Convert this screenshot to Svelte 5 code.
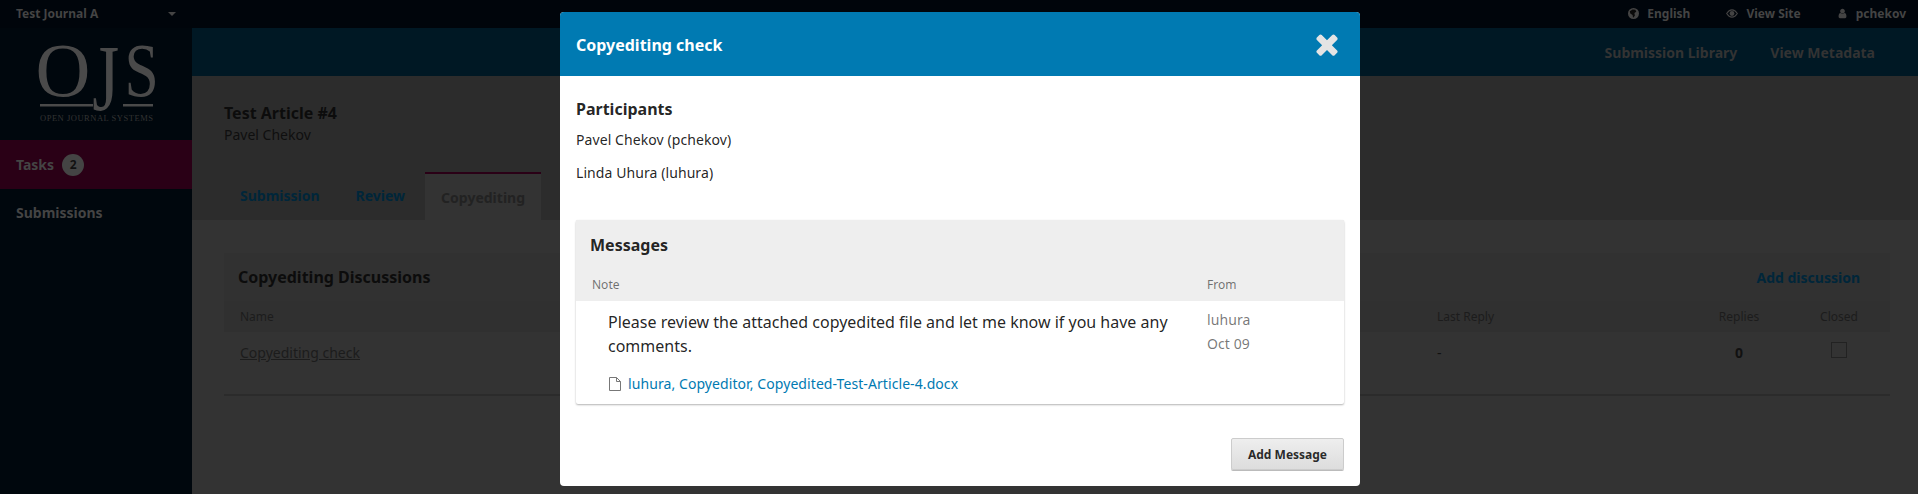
<script>
  const columns = [
    { label: 'Last Reply', value: '-', cls: 'c-last' },
    { label: 'Replies', value: '0', cls: 'c-replies' }
  ];
  let participants = ['Pavel Chekov (pchekov)', 'Linda Uhura (luhura)'];
</script>

<div class="page">
  <header class="topbar">
    <div class="journal">
      <span>Test Journal A</span>
      <i class="caret"></i>
    </div>
    <nav class="usernav">
      <a href="#lang">
        <svg width="11" height="11" viewBox="0 0 12 12"><circle cx="6" cy="6" r="6" fill="#444"/><path d="M2 3.500l3-2 3 .5 1 2-2 1.500 .5 3-2 2-.5-3-2.500-1.500z" fill="#0a0a0a"/></svg>
        English
      </a>
      <a href="#site">
        <svg width="12" height="9" viewBox="0 0 14 10"><path d="M0 5q3-5 7-5t7 5q-3 5-7 5t-7-5zm1.500 0q2.500 3.600 5.500 3.600t5.500-3.600q-2.500-3.600-5.500-3.600t-5.500 3.600z" fill="#444"/><circle cx="7" cy="5" r="2.800" fill="#444"/></svg>
        View Site
      </a>
      <a href="#user">
        <svg width="11" height="11" viewBox="0 0 1792 1792"><path fill="#444" d="M1536 1399q0 109-62.500 187t-150.500 78h-854q-88 0-150.500-78t-62.500-187q0-85 8.500-160.500t31.500-152 58.500-131 94-89 134.500-34.500q131 128 313 128t313-128q76 0 134.500 34.500t94 89 58.500 131 31.500 152 8.500 160.500zm-256-887q0 159-112.500 271.500t-271.500 112.500-271.500-112.500-112.500-271.500 112.500-271.500 271.500-112.500 271.500 112.500 112.500 271.500z"/></svg>
        pchekov
      </a>
    </nav>
  </header>

  <aside class="sidebar">
    <div class="logo">
      <svg width="120" height="90" viewBox="0 0 120 90">
        <text class="logo-big" x="-2.600" y="52" font-size="76">O</text>
        <text class="logo-big" transform="translate(54.300 67) scale(.72 1)" font-size="96">J</text>
        <text class="logo-big" transform="translate(86.400 52) scale(.81 1)" font-size="76">S</text>
        <rect x="2" y="60" width="53" height="2.500" fill="#4a4a4a"/>
        <rect x="85" y="60" width="30" height="2.500" fill="#4a4a4a"/>
        <text class="logo-small" x="2" y="77" textLength="113" font-size="8.500">OPEN JOURNAL SYSTEMS</text>
      </svg>
    </div>
    <a class="side-item active" href="#tasks">Tasks <span class="badge">2</span></a>
    <a class="side-item subs" href="#subs">Submissions</a>
  </aside>

  <main class="main">
    <div class="appbar">
      <a href="#lib">Submission Library</a>
      <a href="#meta">View Metadata</a>
    </div>

    <section class="head">
      <h1>Test Article #4</h1>
      <p>Pavel Chekov</p>
      <div class="tabs">
        <a href="#s">Submission</a>
        <a href="#r">Review</a>
        <a href="#c" class="current">Copyediting</a>
      </div>
    </section>

    <section class="content">
      <div class="panel">
        <div class="panel-title">
          <h2>Copyediting Discussions</h2>
          <a href="#add">Add discussion</a>
        </div>
        <div class="grid-row labels">
          <span class="c-name">Name</span>
          {#each columns as c}<span class={c.cls}>{c.label}</span>{/each}
          <span class="c-closed">Closed</span>
        </div>
        <div class="grid-row values">
          <a class="c-name" href="#check">Copyediting check</a>
          {#each columns as c}<span class={c.cls}>{c.value}</span>{/each}
          <span class="c-closed"><i class="box"></i></span>
        </div>
      </div>
    </section>
  </main>

  <div class="modal">
    <div class="modal-head">
      <h2>Copyediting check</h2>
      <svg class="close" width="26" height="32" viewBox="0 0 1408 1792"><path fill="#e4e4e4" d="M1298 1322q0 40-28 68l-136 136q-28 28-68 28t-68-28l-294-294-294 294q-28 28-68 28t-68-28l-136-136q-28-28-28-68t28-68l294-294-294-294q-28-28-28-68t28-68l136-136q28-28 68-28t68 28l294 294 294-294q28-28 68-28t68 28l136 136q28 28 28 68t-28 68l-294 294 294 294q28 28 28 68z"/></svg>
    </div>
    <div class="modal-body">
      <h3>Participants</h3>
      {#each participants as p}<p class="person">{p}</p>{/each}

      <div class="messages">
        <div class="msg-head">
          <h4>Messages</h4>
          <div class="msg-cols"><span>Note</span><span>From</span></div>
        </div>
        <div class="msg-row">
          <div class="msg-note">
            <p>Please review the attached copyedited file and let me know if you have any comments.</p>
            <a href="#file">
              <svg width="14" height="14" viewBox="0 0 14 14" fill="none" stroke="#777" stroke-width="1"><path d="M1.500 .5h7l4 4v9h-11zM8.500 .5v4h4"/></svg>
              luhura, Copyeditor, Copyedited-Test-Article-4.docx
            </a>
          </div>
          <div class="msg-from">
            <div>luhura</div>
            <div>Oct 09</div>
          </div>
        </div>
      </div>

      <div class="actions"><button>Add Message</button></div>
    </div>
  </div>
</div>

<style>
  :global(body) { margin: 0; background: #333; }
  * { box-sizing: border-box; }
  a { text-decoration: none; color: inherit; }
  h1, h2, h3, h4, p { margin: 0; }

  .page {
    position: relative;
    width: 1918px;
    height: 494px;
    overflow: hidden;
    display: grid;
    grid-template-columns: 192px 1fr;
    grid-template-rows: 28px 1fr;
    font-family: "Noto Sans", sans-serif;
    font-size: 14px;
    color: #111;
    background: #333;
  }

  .topbar {
    grid-column: 1 / 3;
    display: flex;
    justify-content: space-between;
    align-items: center;
    background: #00050b;
    color: #444;
    font-size: 12px;
    font-weight: 700;
    padding: 0 12px 1px 16px;
  }
  .journal { display: flex; align-items: center; width: 160px; justify-content: space-between; }
  .caret { border: 4px solid transparent; border-top-color: #444; margin-top: 4px; }
  .usernav { display: flex; gap: 36px; }
  .usernav a { display: flex; align-items: center; gap: 8px; }

  .sidebar { background: #00070d; color: #444; font-weight: 700; }
  .logo { height: 112px; padding: 16px 0 0 38px; }
  .logo svg { display: block; overflow: visible; }
  .logo-big { font-family: "Liberation Serif", serif; font-weight: 400; fill: #4a4a4a; }
  .logo-small { font-family: "Liberation Serif", serif; font-weight: 400; fill: #333; }
  .side-item { display: flex; align-items: center; gap: 8px; height: 49px; padding-left: 16px; }
  .side-item.active { background: #2a0016; }
  .side-item.subs { padding-bottom: 2px; }
  .badge {
    display: flex;
    align-items: center;
    justify-content: center;
    width: 22px;
    height: 22px;
    border-radius: 50%;
    background: #444;
    color: #111;
    font-size: 12px;
  }

  .main { display: flex; flex-direction: column; min-width: 0; }
  .appbar {
    display: flex;
    justify-content: flex-end;
    align-items: center;
    gap: 33px;
    height: 48px;
    flex: none;
    padding-right: 43px;
    background: #001824;
    color: #333;
    font-weight: 700;
  }

  .head { height: 144px; flex: none; background: #2c2c2c; padding: 27px 32px 0; }
  .head h1 { font-size: 16px; line-height: 20px; color: #0c0c0c; }
  .head p { line-height: 20px; margin-top: 2px; color: #0f0f0f; }
  .tabs { display: flex; gap: 4px; margin-top: 27px; height: 48px; font-weight: 700; color: #00263a; }
  .tabs a { padding: 14px 16px 0; }
  .tabs .current { background: #333; color: #222; border-top: 2px solid #2a0016; }

  .content { flex: 1; padding: 33px 28px 0 32px; background: #333; }
  .panel { height: 143px; border-bottom: 2px solid #2b2b2b; background: #313131; }
  .panel-title { display: flex; justify-content: space-between; align-items: center; height: 48px; padding: 0 30px 0 14px; }
  .panel-title h2 { font-size: 16px; color: #0c0c0c; }
  .panel-title a { font-weight: 700; color: #00263a; }
  .grid-row { display: grid; grid-template-columns: 1fr 252px 100px 100px; padding: 0 1px 0 16px; }
  .labels { height: 31px; background: #303030; font-size: 12px; color: #1c1c1c; align-items: center; }
  .values { background: #333; padding-top: 11px; height: 62px; color: #111; line-height: 20px; }
  .values .c-name { color: #1c1c1c; text-decoration: underline; justify-self: start; }
  .c-replies { text-align: center; }
  .c-closed { text-align: center; }
  .values .c-replies { font-weight: 700; }
  .box { display: block; width: 16px; height: 16px; margin: -1px auto 0; border: 1px solid #222; }

  .modal {
    position: absolute;
    left: 560px;
    top: 12px;
    width: 800px;
    height: 474px;
    background: #fff;
    border-radius: 4px;
    overflow: hidden;
    display: flex;
    flex-direction: column;
    color: rgba(0, 0, 0, .87);
    letter-spacing: .08px;
  }
  .modal-head {
    display: flex;
    justify-content: space-between;
    align-items: center;
    height: 64px;
    flex: none;
    background: #007ab2;
    color: #fff;
    padding: 2px 20px 0 16px;
  }
  .close { margin-top: -2px; }
  .modal-head h2 { font-size: 16px; font-weight: 700; letter-spacing: 0; }
  .modal-body { padding: 21px 16px 0; flex: 1; }
  .modal-body h3 { font-size: 16px; line-height: 24px; letter-spacing: 0; }
  .person { line-height: 20px; margin-top: 9px; }
  .person + .person { margin-top: 13px; }

  .messages { margin-top: 37px; border-radius: 2px; box-shadow: 0 1px 2px rgba(0, 0, 0, .3); }
  .msg-head { background: #eee; height: 81px; padding: 13px 14px 0; }
  .msg-head h4 { font-size: 16px; line-height: 24px; letter-spacing: 0; }
  .msg-cols { display: grid; grid-template-columns: 615px 1fr; padding: 20px 2px 0; font-size: 12px; line-height: 16px; letter-spacing: 0; color: rgba(0, 0, 0, .54); }
  .msg-row { display: grid; grid-template-columns: 631px 1fr; height: 103px; }
  .msg-note { padding: 9px 0 0 32px; }
  .msg-note p { font-size: 16px; line-height: 24px; width: 590px; letter-spacing: 0; }
  .msg-note a { display: flex; align-items: center; gap: 6px; margin-top: 16px; color: #007ab2; line-height: 20px; }
  .msg-from { padding-top: 7px; color: rgba(0, 0, 0, .54); line-height: 24px; }

  .actions { display: flex; justify-content: flex-end; padding-top: 34px; }
  .actions button {
    width: 113px;
    height: 32px;
    font: 700 12px "Noto Sans", sans-serif;
    color: rgba(0, 0, 0, .84);
    border: 1px solid #ccc;
    border-radius: 2px;
    background: linear-gradient(#eee, #ddd);
    box-shadow: 0 1px 0 #bbb;
  }
</style>
